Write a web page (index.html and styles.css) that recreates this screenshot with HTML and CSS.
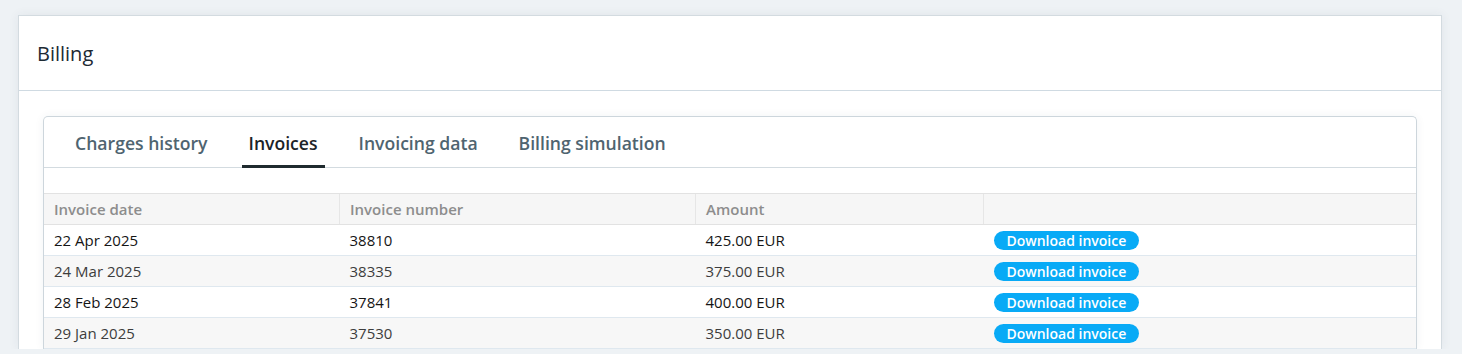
FILE: index.html
```html
<!DOCTYPE html>
<html lang="en">
<head>
    <meta charset="UTF-8">
    <meta name="viewport" content="width=device-width, initial-scale=1.0">
    <title>Billing</title>
    <link rel="stylesheet" href="styles.css">
</head>
<body>
    <div class="card">
        <div class="card-header">Billing</div>
        <div class="card-body">
            <div class="panel">
                <ul class="tabs">
                    <li class="tab">Charges history</li>
                    <li class="tab active">Invoices</li>
                    <li class="tab">Invoicing data</li>
                    <li class="tab">Billing simulation</li>
                </ul>
                <div class="tab-content">
                    <table class="invoices">
                        <thead>
                            <tr>
                                <th class="col-date">Invoice date</th>
                                <th class="col-number">Invoice number</th>
                                <th class="col-amount">Amount</th>
                                <th class="col-action"></th>
                            </tr>
                        </thead>
                        <tbody>
                            <tr>
                                <td>22 Apr 2025</td>
                                <td>38810</td>
                                <td>425.00 EUR</td>
                                <td><button class="download-button">Download invoice</button></td>
                            </tr>
                            <tr>
                                <td>24 Mar 2025</td>
                                <td>38335</td>
                                <td>375.00 EUR</td>
                                <td><button class="download-button">Download invoice</button></td>
                            </tr>
                            <tr>
                                <td>28 Feb 2025</td>
                                <td>37841</td>
                                <td>400.00 EUR</td>
                                <td><button class="download-button">Download invoice</button></td>
                            </tr>
                            <tr>
                                <td>29 Jan 2025</td>
                                <td>37530</td>
                                <td>350.00 EUR</td>
                                <td><button class="download-button">Download invoice</button></td>
                            </tr>
                        </tbody>
                    </table>
                </div>
            </div>
        </div>
    </div>
</body>
</html>
```

FILE: styles.css
```css
body{
    margin: 0;
    padding: 15px 20px 0 18px;
    background-color: #eef2f5;
    font-family: "Open Sans", "Noto Sans", sans-serif;
    overflow: hidden;
}

.card{
    background-color: #ffffff;
    border: 1px solid #d3dbe0;
    border-bottom: none;
    box-shadow: 0 0 10px rgba(40, 60, 80, 0.07);
}

.card-header{
    padding: 23px 18px 22px 18px;
    line-height: 29px;
    font-size: 20px;
    color: #1d2a33;
    border-bottom: 1px solid #cfdae2;
}

.card-body{
    padding: 25px 24px 0 24px;
}

.panel{
    border: 1px solid #cdd6dc;
    border-bottom: none;
    border-radius: 5px 5px 0 0;
    box-shadow: 0 0 10px rgba(40, 60, 80, 0.06);
}

.tabs{
    display: flex;
    gap: 27px;
    margin: 0;
    padding: 0 24px;
    list-style: none;
    border-bottom: 1px solid #d3dbe0;
}

.tab{
    padding: 4px 7px 0 7px;
    line-height: 44px;
    margin-bottom: -1px;
    border-bottom: 3px solid transparent;
    font-size: 17.6px;
    font-weight: 600;
    color: #4f6470;
}

.tab.active{
    color: #1b2328;
    border-bottom-color: #1f2a2e;
}

.tab-content{
    padding-top: 25px;
}

.invoices{
    width: 100%;
    border-collapse: collapse;
    table-layout: fixed;
    font-size: 15px;
}

.invoices th{
    height: 30px;
    padding: 0 10px;
    text-align: left;
    font-weight: 600;
    color: #8d8d8d;
    background-color: #f6f6f6;
    border-top: 1px solid #e2e2e2;
    border-bottom: 1px solid #e2e2e2;
    border-left: 1px solid #e6e6e6;
}

.invoices th:first-child{
    border-left: none;
}

.col-date{
    width: 275px;
}

.col-number{
    width: 335px;
}

.col-amount{
    width: 267px;
}

.invoices td{
    height: 30px;
    padding: 0 10px;
    color: #151515;
    border-bottom: 1px solid #dfe8ef;
}

.invoices tbody tr:nth-child(even) td{
    background-color: #f7f7f7;
    color: #3d3d3d;
}

.download-button{
    display: block;
    padding: 0 13px;
    height: 19px;
    line-height: 19px;
    border: none;
    border-radius: 10px;
    background-color: #08aaf6;
    color: #ffffff;
    font-family: "Open Sans", "Noto Sans", sans-serif;
    font-size: 14px;
    font-weight: 600;
}
```
